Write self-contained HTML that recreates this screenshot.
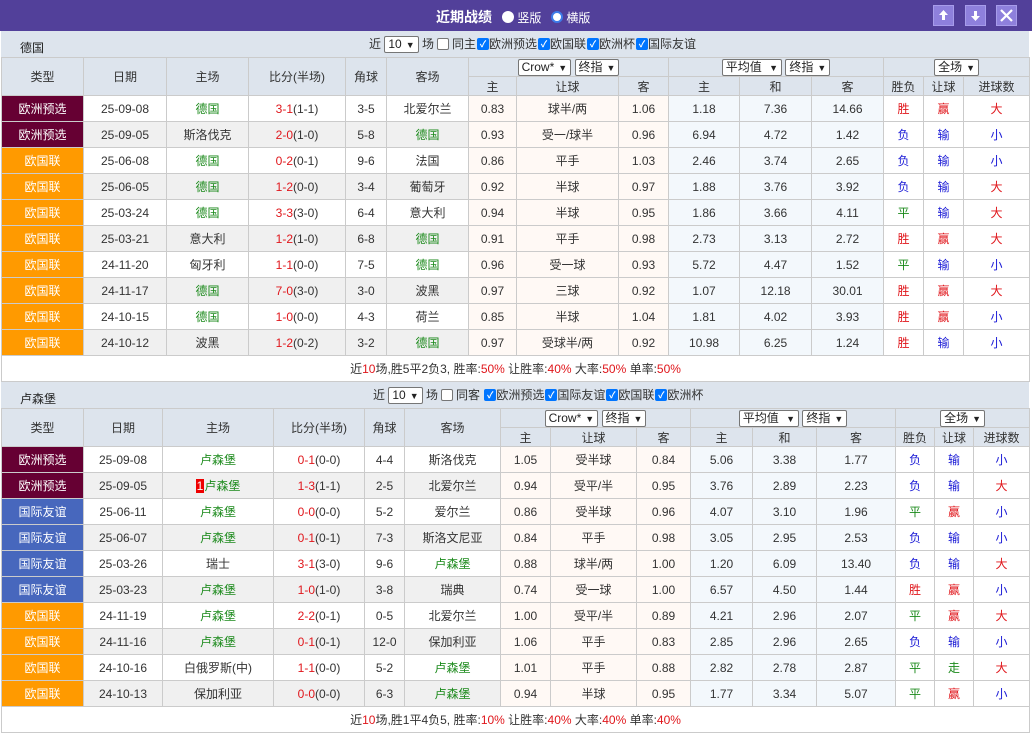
<!DOCTYPE html>
<html><head><meta charset="utf-8">
<style>
*{box-sizing:border-box;margin:0;padding:0}
body{width:1032px;height:733px;background:#fff;font-family:"Liberation Sans","Noto Sans CJK SC",sans-serif;font-size:12px;color:#333;position:relative;overflow:hidden}
.bar{position:absolute;left:0;top:0;width:1032px;height:31px;background:#52409a}
.bar .t{position:absolute;left:436px;top:7px;color:#fff;font-weight:bold;font-size:14px}
.radio{display:inline-block;width:12px;height:12px;border-radius:50%;vertical-align:-1px}
.bar .r{position:absolute;top:9px;color:#fff;font-size:12px}
.btn{position:absolute;top:5px;width:21px;height:21px;background:#8e80dc;border:1px solid #a79cea}
.filt{position:absolute;left:1px;width:1028px;height:26px;background:#dde4ed}
.filt .nm{position:absolute;left:19px;top:8px;font-size:12px;color:#222}
.filt .c{position:absolute;top:5px;white-space:nowrap;font-size:12px;color:#333;line-height:17px}
.sel{display:inline-block;height:17px;border:1px solid #767676;border-radius:2px;background:#fff;padding:0 3px;line-height:15px;vertical-align:top;font-size:12px;color:#222}
.sel i{font-style:normal;font-size:9px;margin-left:4px}
.cb{display:inline-block;width:12px;height:12px;border-radius:2px;background:#0075ff;color:#fff;font-size:9px;line-height:12px;text-align:center;vertical-align:top;margin-top:2px;font-weight:bold;margin-left:1px}
.cbe{display:inline-block;width:12px;height:12px;border-radius:2px;border:1px solid #767676;background:#fff;vertical-align:top;margin:2px 3px 0}
table{position:absolute;left:1px;border-collapse:collapse;table-layout:fixed;width:1028px}
td{border:1px solid #cbcbcb;text-align:center;height:26px;padding:0;white-space:nowrap;overflow:hidden;font-size:12px}
tr.h td{height:19px;background:#dde4ed;color:#333}
tr.h td.rs{height:38px}
tr.e td.l{background:#f0f0f0}
td.a{background:#fff9f5}
td.b{background:#f3f8fc}
td.ty{color:#fff}
.eq{background:#660033!important}.nl{background:#ff9a00!important}.fr{background:#4767bd!important}
.g{color:#1b8a1b}.rd{color:#e0161b}.bl{color:#1a1ad6}.gr{color:#1b8a1b}
td.sum{height:26px;text-align:center;background:#fff}
.badge{background:#e00;color:#fff;padding:0 1px}
</style></head><body>
<div class="bar">
<span class="t">近期战绩</span>
<span class="r" style="left:502px"><span class="radio" style="background:#fff"></span> 竖版</span>
<span class="r" style="left:551px"><span class="radio" style="border:2px solid #3d7be8;background:#fff"></span> 横版</span>
<div class="btn" style="left:933px"><svg width="19" height="19" viewBox="0 0 19 19"><path d="M9.5 4 L5 9 H8 V14 H11 V9 H14 Z" fill="#fff"/></svg></div>
<div class="btn" style="left:965px"><svg width="19" height="19" viewBox="0 0 19 19"><path d="M9.5 15 L5 10 H8 V5 H11 V10 H14 Z" fill="#fff"/></svg></div>
<div class="btn" style="left:996px"><svg width="19" height="19" viewBox="0 0 19 19"><path d="M4 4 L15 15 M15 4 L4 15" stroke="#fff" stroke-width="2.2"/></svg></div>
</div>

<div class="filt" style="top:31px"><span class="nm">德国</span>
<span class="c" style="left:368px">近 <span class="sel">10<i>▼</i></span> 场<span class="cbe"></span>同主<span class="cb">✓</span>欧洲预选<span class="cb">✓</span>欧国联<span class="cb">✓</span>欧洲杯<span class="cb">✓</span>国际友谊</span></div>

<table style="top:57px">
<colgroup><col style="width:82px"><col style="width:83px"><col style="width:82px"><col style="width:97px"><col style="width:41px"><col style="width:82px"><col style="width:48px"><col style="width:102px"><col style="width:50px"><col style="width:71px"><col style="width:72px"><col style="width:72px"><col style="width:40px"><col style="width:40px"><col style="width:66px"></colgroup>
<tr class="h"><td rowspan="2" class="rs">类型</td><td rowspan="2" class="rs">日期</td><td rowspan="2" class="rs">主场</td><td rowspan="2" class="rs">比分(半场)</td><td rowspan="2" class="rs">角球</td><td rowspan="2" class="rs">客场</td>
<td colspan="3"><span class="sel">Crow*<i>▼</i></span> <span class="sel">终指<i>▼</i></span></td><td colspan="3"><span class="sel">平均值 <i>▼</i></span> <span class="sel">终指<i>▼</i></span></td><td colspan="3"><span class="sel">全场<i>▼</i></span></td></tr>
<tr class="h"><td>主</td><td>让球</td><td>客</td><td>主</td><td>和</td><td>客</td><td>胜负</td><td>让球</td><td>进球数</td></tr>
<tr><td class="ty eq">欧洲预选</td><td class="l">25-09-08</td><td class="l g">德国</td><td class="l"><span class="rd">3-1</span>(1-1)</td><td class="l">3-5</td><td class="l">北爱尔兰</td><td class="a">0.83</td><td class="a">球半/两</td><td class="a">1.06</td><td class="b">1.18</td><td class="b">7.36</td><td class="b">14.66</td><td class="rd">胜</td><td class="rd">赢</td><td class="rd">大</td></tr>
<tr class="e"><td class="ty eq">欧洲预选</td><td class="l">25-09-05</td><td class="l">斯洛伐克</td><td class="l"><span class="rd">2-0</span>(1-0)</td><td class="l">5-8</td><td class="l g">德国</td><td class="a">0.93</td><td class="a">受一/球半</td><td class="a">0.96</td><td class="b">6.94</td><td class="b">4.72</td><td class="b">1.42</td><td class="bl">负</td><td class="bl">输</td><td class="bl">小</td></tr>
<tr><td class="ty nl">欧国联</td><td class="l">25-06-08</td><td class="l g">德国</td><td class="l"><span class="rd">0-2</span>(0-1)</td><td class="l">9-6</td><td class="l">法国</td><td class="a">0.86</td><td class="a">平手</td><td class="a">1.03</td><td class="b">2.46</td><td class="b">3.74</td><td class="b">2.65</td><td class="bl">负</td><td class="bl">输</td><td class="bl">小</td></tr>
<tr class="e"><td class="ty nl">欧国联</td><td class="l">25-06-05</td><td class="l g">德国</td><td class="l"><span class="rd">1-2</span>(0-0)</td><td class="l">3-4</td><td class="l">葡萄牙</td><td class="a">0.92</td><td class="a">半球</td><td class="a">0.97</td><td class="b">1.88</td><td class="b">3.76</td><td class="b">3.92</td><td class="bl">负</td><td class="bl">输</td><td class="rd">大</td></tr>
<tr><td class="ty nl">欧国联</td><td class="l">25-03-24</td><td class="l g">德国</td><td class="l"><span class="rd">3-3</span>(3-0)</td><td class="l">6-4</td><td class="l">意大利</td><td class="a">0.94</td><td class="a">半球</td><td class="a">0.95</td><td class="b">1.86</td><td class="b">3.66</td><td class="b">4.11</td><td class="gr">平</td><td class="bl">输</td><td class="rd">大</td></tr>
<tr class="e"><td class="ty nl">欧国联</td><td class="l">25-03-21</td><td class="l">意大利</td><td class="l"><span class="rd">1-2</span>(1-0)</td><td class="l">6-8</td><td class="l g">德国</td><td class="a">0.91</td><td class="a">平手</td><td class="a">0.98</td><td class="b">2.73</td><td class="b">3.13</td><td class="b">2.72</td><td class="rd">胜</td><td class="rd">赢</td><td class="rd">大</td></tr>
<tr><td class="ty nl">欧国联</td><td class="l">24-11-20</td><td class="l">匈牙利</td><td class="l"><span class="rd">1-1</span>(0-0)</td><td class="l">7-5</td><td class="l g">德国</td><td class="a">0.96</td><td class="a">受一球</td><td class="a">0.93</td><td class="b">5.72</td><td class="b">4.47</td><td class="b">1.52</td><td class="gr">平</td><td class="bl">输</td><td class="bl">小</td></tr>
<tr class="e"><td class="ty nl">欧国联</td><td class="l">24-11-17</td><td class="l g">德国</td><td class="l"><span class="rd">7-0</span>(3-0)</td><td class="l">3-0</td><td class="l">波黑</td><td class="a">0.97</td><td class="a">三球</td><td class="a">0.92</td><td class="b">1.07</td><td class="b">12.18</td><td class="b">30.01</td><td class="rd">胜</td><td class="rd">赢</td><td class="rd">大</td></tr>
<tr><td class="ty nl">欧国联</td><td class="l">24-10-15</td><td class="l g">德国</td><td class="l"><span class="rd">1-0</span>(0-0)</td><td class="l">4-3</td><td class="l">荷兰</td><td class="a">0.85</td><td class="a">半球</td><td class="a">1.04</td><td class="b">1.81</td><td class="b">4.02</td><td class="b">3.93</td><td class="rd">胜</td><td class="rd">赢</td><td class="bl">小</td></tr>
<tr class="e"><td class="ty nl">欧国联</td><td class="l">24-10-12</td><td class="l">波黑</td><td class="l"><span class="rd">1-2</span>(0-2)</td><td class="l">3-2</td><td class="l g">德国</td><td class="a">0.97</td><td class="a">受球半/两</td><td class="a">0.92</td><td class="b">10.98</td><td class="b">6.25</td><td class="b">1.24</td><td class="rd">胜</td><td class="bl">输</td><td class="bl">小</td></tr>
<tr><td colspan="15" class="sum">近<span class="rd">10</span>场,胜5平2负3, 胜率:<span class="rd">50%</span> 让胜率:<span class="rd">40%</span> 大率:<span class="rd">50%</span> 单率:<span class="rd">50%</span></td></tr>
</table>

<div class="filt" style="top:382px"><span class="nm">卢森堡</span>
<span class="c" style="left:372px">近 <span class="sel">10<i>▼</i></span> 场<span class="cbe"></span>同客 <span class="cb">✓</span>欧洲预选<span class="cb">✓</span>国际友谊<span class="cb">✓</span>欧国联<span class="cb">✓</span>欧洲杯</span></div>

<table style="top:408px">
<colgroup><col style="width:82px"><col style="width:79px"><col style="width:111px"><col style="width:91px"><col style="width:40px"><col style="width:96px"><col style="width:50px"><col style="width:86px"><col style="width:54px"><col style="width:62px"><col style="width:64px"><col style="width:79px"><col style="width:39px"><col style="width:39px"><col style="width:56px"></colgroup>
<tr class="h"><td rowspan="2" class="rs">类型</td><td rowspan="2" class="rs">日期</td><td rowspan="2" class="rs">主场</td><td rowspan="2" class="rs">比分(半场)</td><td rowspan="2" class="rs">角球</td><td rowspan="2" class="rs">客场</td>
<td colspan="3"><span class="sel">Crow*<i>▼</i></span> <span class="sel">终指<i>▼</i></span></td><td colspan="3"><span class="sel">平均值 <i>▼</i></span> <span class="sel">终指<i>▼</i></span></td><td colspan="3"><span class="sel">全场<i>▼</i></span></td></tr>
<tr class="h"><td>主</td><td>让球</td><td>客</td><td>主</td><td>和</td><td>客</td><td>胜负</td><td>让球</td><td>进球数</td></tr>
<tr><td class="ty eq">欧洲预选</td><td class="l">25-09-08</td><td class="l g">卢森堡</td><td class="l"><span class="rd">0-1</span>(0-0)</td><td class="l">4-4</td><td class="l">斯洛伐克</td><td class="a">1.05</td><td class="a">受半球</td><td class="a">0.84</td><td class="b">5.06</td><td class="b">3.38</td><td class="b">1.77</td><td class="bl">负</td><td class="bl">输</td><td class="bl">小</td></tr>
<tr class="e"><td class="ty eq">欧洲预选</td><td class="l">25-09-05</td><td class="l g"><span class="badge">1</span>卢森堡</td><td class="l"><span class="rd">1-3</span>(1-1)</td><td class="l">2-5</td><td class="l">北爱尔兰</td><td class="a">0.94</td><td class="a">受平/半</td><td class="a">0.95</td><td class="b">3.76</td><td class="b">2.89</td><td class="b">2.23</td><td class="bl">负</td><td class="bl">输</td><td class="rd">大</td></tr>
<tr><td class="ty fr">国际友谊</td><td class="l">25-06-11</td><td class="l g">卢森堡</td><td class="l"><span class="rd">0-0</span>(0-0)</td><td class="l">5-2</td><td class="l">爱尔兰</td><td class="a">0.86</td><td class="a">受半球</td><td class="a">0.96</td><td class="b">4.07</td><td class="b">3.10</td><td class="b">1.96</td><td class="gr">平</td><td class="rd">赢</td><td class="bl">小</td></tr>
<tr class="e"><td class="ty fr">国际友谊</td><td class="l">25-06-07</td><td class="l g">卢森堡</td><td class="l"><span class="rd">0-1</span>(0-1)</td><td class="l">7-3</td><td class="l">斯洛文尼亚</td><td class="a">0.84</td><td class="a">平手</td><td class="a">0.98</td><td class="b">3.05</td><td class="b">2.95</td><td class="b">2.53</td><td class="bl">负</td><td class="bl">输</td><td class="bl">小</td></tr>
<tr><td class="ty fr">国际友谊</td><td class="l">25-03-26</td><td class="l">瑞士</td><td class="l"><span class="rd">3-1</span>(3-0)</td><td class="l">9-6</td><td class="l g">卢森堡</td><td class="a">0.88</td><td class="a">球半/两</td><td class="a">1.00</td><td class="b">1.20</td><td class="b">6.09</td><td class="b">13.40</td><td class="bl">负</td><td class="bl">输</td><td class="rd">大</td></tr>
<tr class="e"><td class="ty fr">国际友谊</td><td class="l">25-03-23</td><td class="l g">卢森堡</td><td class="l"><span class="rd">1-0</span>(1-0)</td><td class="l">3-8</td><td class="l">瑞典</td><td class="a">0.74</td><td class="a">受一球</td><td class="a">1.00</td><td class="b">6.57</td><td class="b">4.50</td><td class="b">1.44</td><td class="rd">胜</td><td class="rd">赢</td><td class="bl">小</td></tr>
<tr><td class="ty nl">欧国联</td><td class="l">24-11-19</td><td class="l g">卢森堡</td><td class="l"><span class="rd">2-2</span>(0-1)</td><td class="l">0-5</td><td class="l">北爱尔兰</td><td class="a">1.00</td><td class="a">受平/半</td><td class="a">0.89</td><td class="b">4.21</td><td class="b">2.96</td><td class="b">2.07</td><td class="gr">平</td><td class="rd">赢</td><td class="rd">大</td></tr>
<tr class="e"><td class="ty nl">欧国联</td><td class="l">24-11-16</td><td class="l g">卢森堡</td><td class="l"><span class="rd">0-1</span>(0-1)</td><td class="l">12-0</td><td class="l">保加利亚</td><td class="a">1.06</td><td class="a">平手</td><td class="a">0.83</td><td class="b">2.85</td><td class="b">2.96</td><td class="b">2.65</td><td class="bl">负</td><td class="bl">输</td><td class="bl">小</td></tr>
<tr><td class="ty nl">欧国联</td><td class="l">24-10-16</td><td class="l">白俄罗斯(中)</td><td class="l"><span class="rd">1-1</span>(0-0)</td><td class="l">5-2</td><td class="l g">卢森堡</td><td class="a">1.01</td><td class="a">平手</td><td class="a">0.88</td><td class="b">2.82</td><td class="b">2.78</td><td class="b">2.87</td><td class="gr">平</td><td class="gr">走</td><td class="rd">大</td></tr>
<tr class="e"><td class="ty nl">欧国联</td><td class="l">24-10-13</td><td class="l">保加利亚</td><td class="l"><span class="rd">0-0</span>(0-0)</td><td class="l">6-3</td><td class="l g">卢森堡</td><td class="a">0.94</td><td class="a">半球</td><td class="a">0.95</td><td class="b">1.77</td><td class="b">3.34</td><td class="b">5.07</td><td class="gr">平</td><td class="rd">赢</td><td class="bl">小</td></tr>
<tr><td colspan="15" class="sum">近<span class="rd">10</span>场,胜1平4负5, 胜率:<span class="rd">10%</span> 让胜率:<span class="rd">40%</span> 大率:<span class="rd">40%</span> 单率:<span class="rd">40%</span></td></tr>
</table>
</body></html>
